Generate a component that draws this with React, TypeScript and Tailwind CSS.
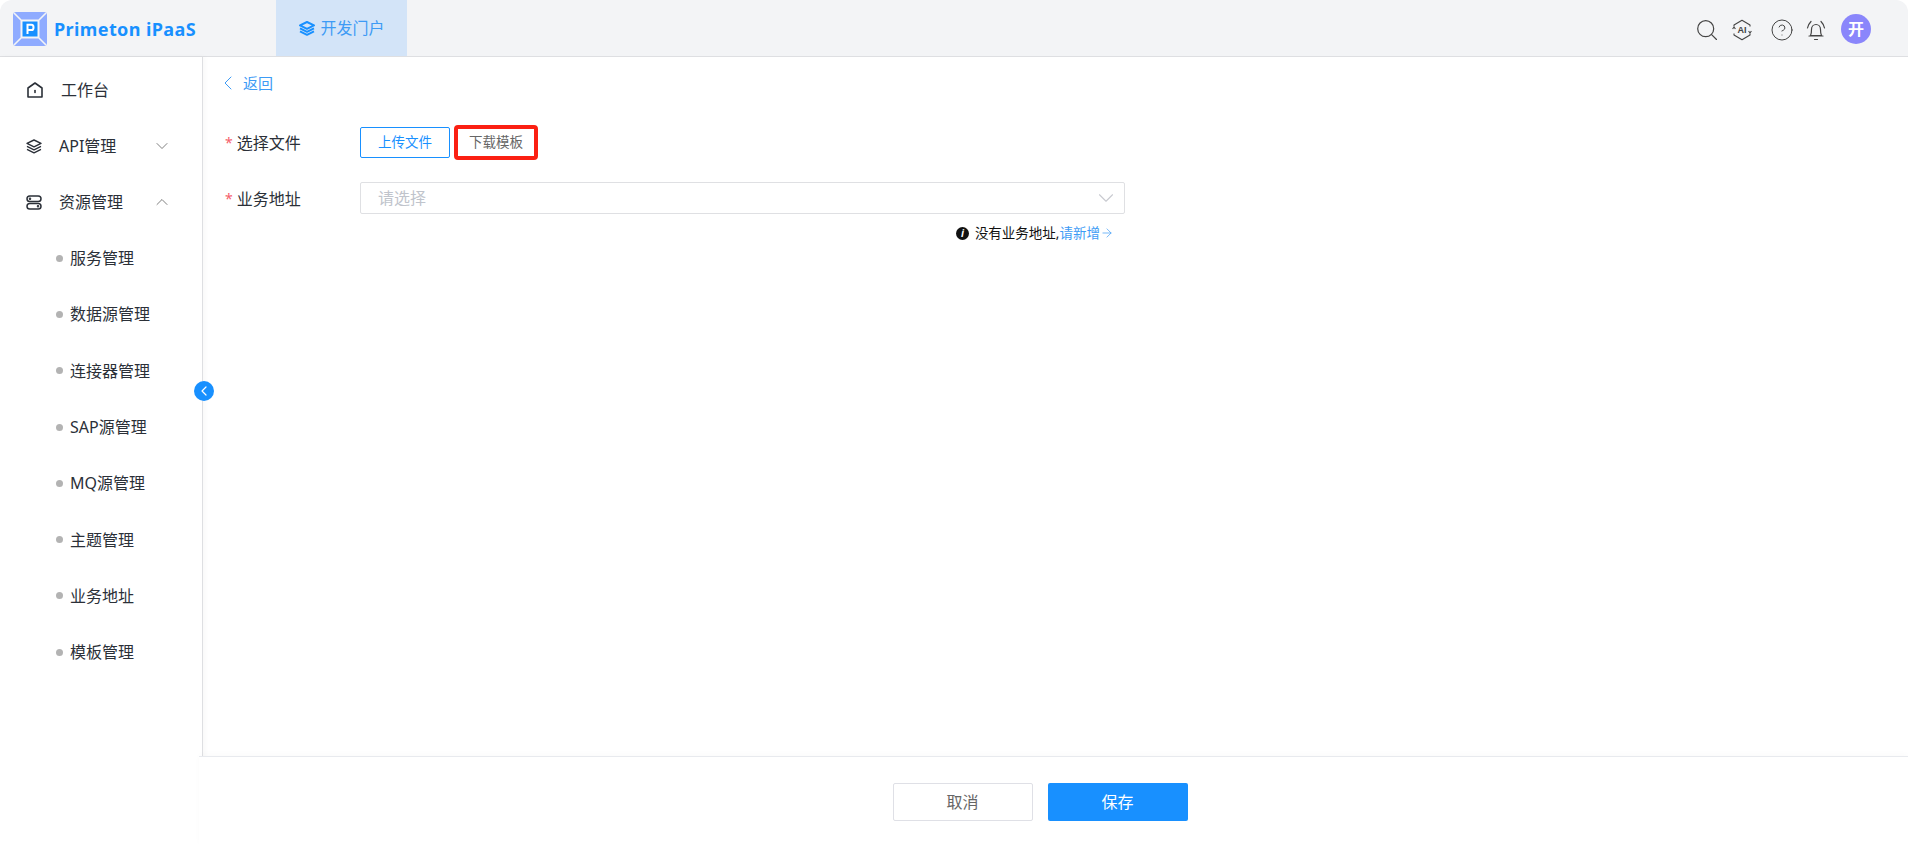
import { ArrowRight, ChevronDown, ChevronLeft, ChevronUp, CircleHelp } from "lucide-react";

const subMenus = ["服务管理", "数据源管理", "连接器管理", "SAP源管理", "MQ源管理", "主题管理", "业务地址", "模板管理"];

function Logo() {
  return (
    <svg width="34" height="34" viewBox="0 0 34 34">
      <rect width="34" height="34" rx="3" fill="#8fabff" />
      <path d="M1 1L8 8M33 1L26 8M1 33L8 26M33 33L26 26" stroke="#f3f4f6" strokeWidth="1.6" />
      <rect x="7.5" y="7.5" width="19" height="19" fill="#f3f4f6" />
      <rect x="9.5" y="9.5" width="15" height="15" fill="#1890ff" />
      <path d="M14.5 22V12.8H18.5C21.2 12.8 21.2 18 18.5 18H14.5" fill="none" stroke="#fff" strokeWidth="2" />
    </svg>
  );
}

function HomeIcon() {
  return (
    <svg width="16" height="16" viewBox="0 0 16 16" fill="none" stroke="#2b3038" strokeWidth="1.6" strokeLinejoin="round">
      <path d="M1 6L8 1L15 6V15H1Z" />
      <path d="M8 8.5V10.5" strokeLinecap="round" />
    </svg>
  );
}

function StackIcon({ color = "#2b3038", width = 1.4 }: { color?: string; width?: number }) {
  return (
    <svg width="16" height="15" viewBox="0 0 16 15" fill="none" stroke={color} strokeWidth={width} strokeLinejoin="round">
      <path d="M8 1L15 4.4L8 7.8L1 4.4Z" />
      <path d="M1 7.4L8 10.8L15 7.4" />
      <path d="M1 10.4L8 13.8L15 10.4" />
    </svg>
  );
}

function ServerIcon() {
  return (
    <svg width="16" height="15" viewBox="0 0 16 15" fill="none" stroke="#2b3038" strokeWidth="1.5">
      <rect x="1" y="1" width="14" height="5.5" rx="2.75" />
      <rect x="1" y="8.5" width="14" height="5.5" rx="2.75" />
      <circle cx="4" cy="3.75" r="0.5" />
      <circle cx="12" cy="11.25" r="0.5" />
    </svg>
  );
}

function SearchIcon() {
  return (
    <svg width="20" height="20" viewBox="0 0 20 20" fill="none" stroke="#444" strokeWidth="1.2" strokeLinecap="round">
      <circle cx="8.7" cy="8.7" r="8" />
      <path d="M14.6 14.6L19.5 19.5" />
    </svg>
  );
}

function AiIcon() {
  return (
    <svg width="20" height="22" viewBox="0 0 20 22" fill="none" stroke="#444" strokeWidth="1.1" strokeLinejoin="round">
      <path d="M2 7.5V6L10 1.2L18 6V7.5M18 14.5V16L10 20.8L2 16V14.5" />
      <path d="M0.6 10L2 8L3.4 10M16.6 12L18 14L19.4 12" />
      <text x="10" y="14.2" textAnchor="middle" fontSize="9" fontWeight="700" fill="#444" stroke="none" fontFamily="Liberation Sans, sans-serif">
        AI
      </text>
    </svg>
  );
}

function BellIcon() {
  return (
    <svg width="20" height="21" viewBox="0 0 20 21" fill="none" stroke="#444" strokeWidth="1.2" strokeLinecap="round" strokeLinejoin="round">
      <path d="M4.5 15.5C5.5 13.5 5.5 11.5 5.5 9.5C5.5 6.5 7.5 4.5 10 4.5C12.5 4.5 14.5 6.5 14.5 9.5C14.5 11.5 14.5 13.5 15.5 15.5Z" />
      <path d="M3 16H17M8.5 19.5H11.5" />
      <path d="M1.5 8C2 5.5 3 3.5 5 1.5M18.5 8C18 5.5 17 3.5 15 1.5" />
    </svg>
  );
}

export default function App() {
  return (
    <div
      className="w-[1908px] h-[846px] overflow-hidden flex flex-col bg-white text-[#2b3038] text-base"
      style={{ fontFamily: '"Noto Sans", "Noto Sans CJK SC", sans-serif' }}
    >
      <header className="h-[57px] shrink-0 flex items-stretch bg-[#f3f4f6] border-b border-[#dedfe2] rounded-tl-xl rounded-tr-xl">
        <div className="w-[276px] pl-[13px] pt-[1px] flex items-center gap-[7px]">
          <Logo />
          <span className="text-lg font-bold text-[#1890ff] tracking-[0.4px]">Primeton iPaaS</span>
        </div>
        <div className="w-[131px] pl-[1px] flex items-center justify-center gap-[5px] bg-[#d3e4f8]">
          <StackIcon color="#1890ff" width={2} />
          <span className="text-[#3d9bf5]">开发门户</span>
        </div>
        <div className="flex-1 flex items-center justify-end pr-[37px] pt-[4px]">
          <SearchIcon />
          <span className="ml-[15px]">
            <AiIcon />
          </span>
          <CircleHelp size={24} strokeWidth={1} className="ml-[18px] text-[#444]" />
          <span className="ml-[12px]">
            <BellIcon />
          </span>
          <span className="ml-[15px] -mt-[2px] size-[30px] rounded-full bg-[#8a86fb] text-white font-bold flex items-center justify-center">
            开
          </span>
        </div>
      </header>

      <div className="flex-1 flex min-h-0 relative">
        <aside className="w-[203px] shrink-0 border-r border-[#dedfe2] pt-[5px] shadow-[2px_0_5px_rgba(0,0,0,0.03)]">
          <div className="h-[56px] flex items-center pl-[27px] gap-[18px]">
            <HomeIcon />
            <span>工作台</span>
          </div>
          <div className="h-[56px] flex items-center pl-[26px] gap-[17px]">
            <StackIcon />
            <span className="w-[76px]">API管理</span>
            <ChevronDown size={20} strokeWidth={1} className="text-[#666]" />
          </div>
          <div className="h-[56px] flex items-center pl-[26px] gap-[17px]">
            <ServerIcon />
            <span className="w-[76px]">资源管理</span>
            <ChevronUp size={20} strokeWidth={1} className="text-[#666]" />
          </div>
          {subMenus.map((m) => (
            <div key={m} className="h-[56.3px] flex items-center pl-[56px] gap-[7px]">
              <span className="size-[7px] rounded-full bg-[#b3b3b3]" />
              <span>{m}</span>
            </div>
          ))}
        </aside>

        <span className="absolute left-[194px] top-[324px] size-[20px] rounded-full bg-[#1890ff] text-white flex items-center justify-center">
          <ChevronLeft size={16} strokeWidth={1.8} />
        </span>

        <main className="flex-1 flex flex-col min-w-0">
          <div className="flex-1 pl-[22px] pt-[14px]">
            <div className="flex items-center gap-[3px] text-[15px] text-[#3d9bf5]">
              <ChevronLeft size={24} strokeWidth={1} className="-ml-[9px]" />
              <span>返回</span>
            </div>

            <div className="mt-[27px] flex items-center h-[40px]">
              <div className="w-[135px] pt-[2px] flex items-center gap-[4px]">
                <span className="text-[#f5606a] text-sm">*</span>
                <span>选择文件</span>
              </div>
              <button className="w-[90px] h-[31px] rounded-[2px] border border-[#1890ff] text-[13.5px] text-[#1890ff] bg-white">
                上传文件
              </button>
              <button className="ml-[4px] w-[84px] h-[35px] rounded-[4px] border-[4px] border-[#fb2012] text-[13.5px] text-[#666] bg-white">
                下载模板
              </button>
            </div>

            <div className="mt-[20px] flex items-center">
              <div className="w-[135px] pt-[2px] flex items-center gap-[4px]">
                <span className="text-[#f5606a] text-sm">*</span>
                <span>业务地址</span>
              </div>
              <div className="w-[765px] h-[32px] rounded-[2px] border border-[#dfe0e3] flex items-center justify-between pl-[17px] pr-[5px] text-[#c0c4cc]">
                <span>请选择</span>
                <ChevronDown size={26} strokeWidth={1} className="text-[#c8cad0]" />
              </div>
            </div>

            <div className="w-[899px] mt-[9px] pr-[10px] flex items-center justify-end gap-[6px] text-[13.5px] text-[#111]">
              <span className="size-[13px] rounded-full bg-[#111] text-white text-[10px] font-bold italic flex items-center justify-center">
                i
              </span>
              <span className="flex items-center">
                没有业务地址,<span className="text-[#3d9bf5]">请新增</span>
                <ArrowRight size={14} strokeWidth={1.2} className="text-[#3d9bf5]" />
              </span>
            </div>
          </div>

          <footer className="h-[90px] shrink-0 -ml-[4px] relative bg-white border-t border-[#e8eaee] flex items-center justify-center gap-[15px] pr-[27px] shadow-[0_-2px_6px_rgba(0,0,0,0.02)]">
            <button className="w-[140px] h-[38px] rounded-[2px] border border-[#dfe0e6] text-[#666] bg-white">取消</button>
            <button className="w-[140px] h-[38px] rounded-[2px] bg-[#1890ff] text-white">保存</button>
          </footer>
        </main>
      </div>
    </div>
  );
}
